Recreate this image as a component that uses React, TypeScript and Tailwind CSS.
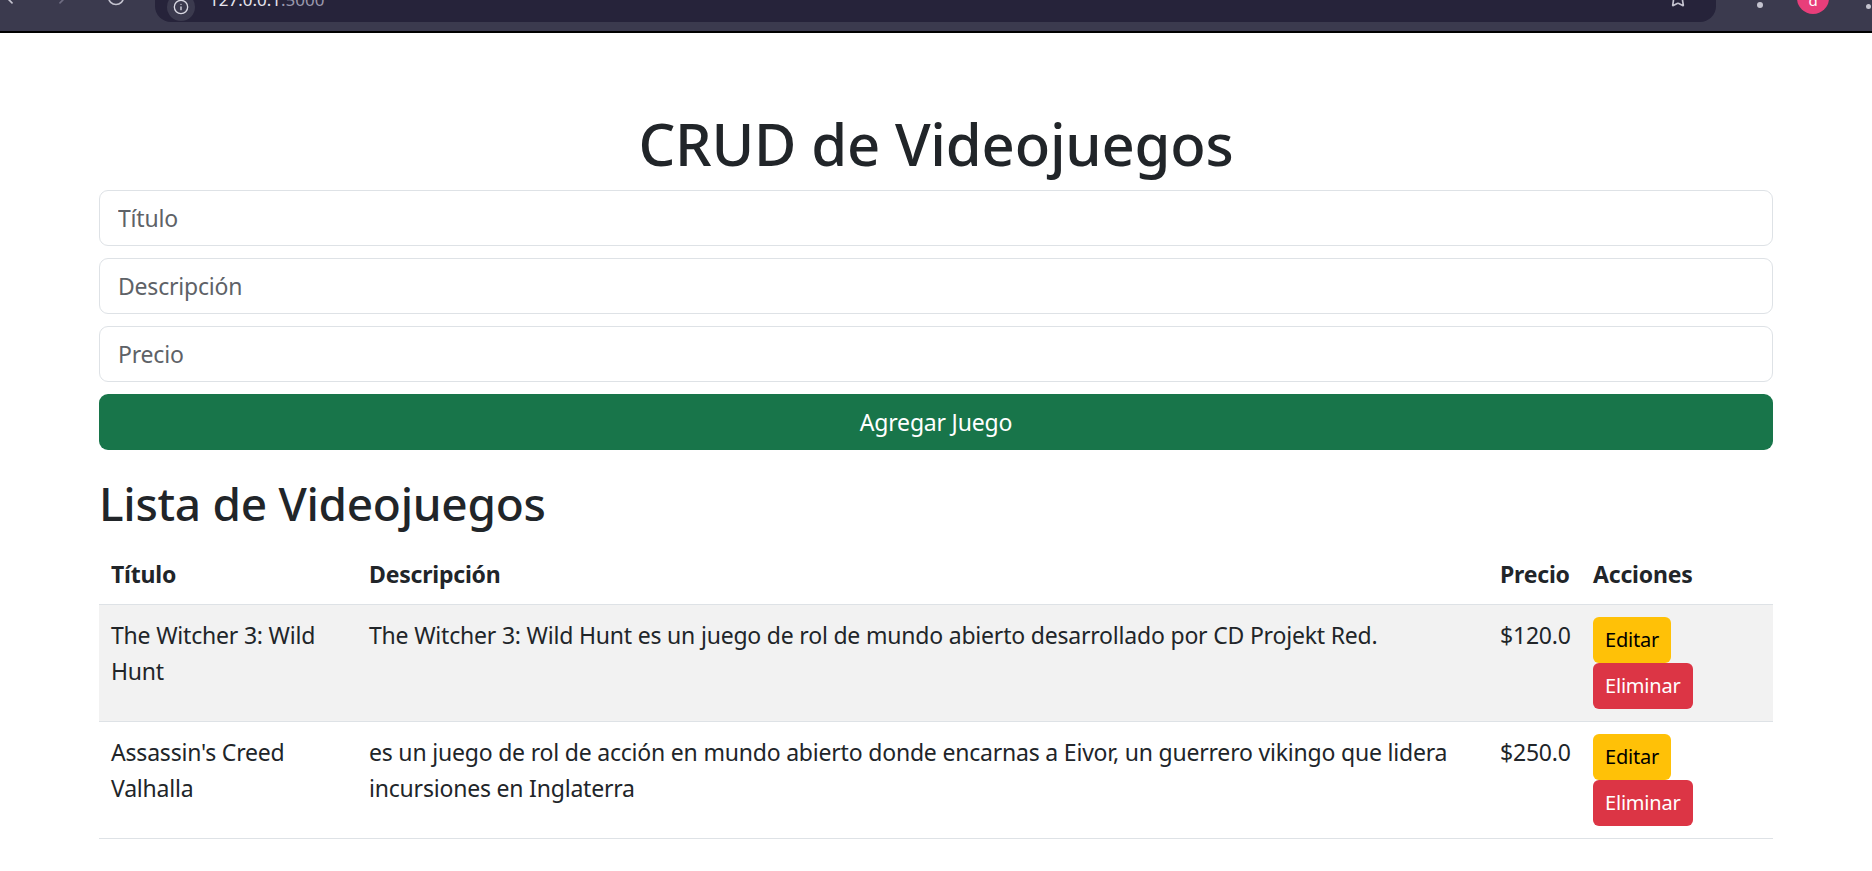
import { ArrowLeft, ArrowRight, RotateCw, Star, Info } from 'lucide-react';

const juegos = [
  {
    titulo: 'The Witcher 3: Wild Hunt',
    descripcion: 'The Witcher 3: Wild Hunt es un juego de rol de mundo abierto desarrollado por CD Projekt Red.',
    precio: '$120.0',
  },
  {
    titulo: "Assassin's Creed Valhalla",
    descripcion:
      'es un juego de rol de acción en mundo abierto donde encarnas a Eivor, un guerrero vikingo que lidera incursiones en Inglaterra',
    precio: '$250.0',
  },
];

const BrowserBar = () => (
  <div className="h-[33px] bg-[#3b3a4e] border-b-2 border-black overflow-hidden flex items-start">
    <ArrowLeft className="ml-[2px] -mt-[13px] w-[20px] h-[20px] text-[#c4c3cf]" />
    <ArrowRight className="ml-[28px] -mt-[13px] w-[20px] h-[20px] text-[#6f6d82]" />
    <RotateCw className="ml-[36px] -mt-[13px] w-[20px] h-[20px] text-[#c4c3cf]" />
    <div className="ml-[29px] w-[1561px] h-[22px] bg-[#26233a] rounded-b-[16px] flex items-start">
      <div className="ml-[12px] -mt-[7px] w-[28px] h-[28px] rounded-full bg-[#3b3a4e] flex items-center justify-center">
        <Info className="w-[16px] h-[16px] text-[#d9d8e2]" />
      </div>
      <span className="ml-[14px] -mt-[10px] text-[17px] leading-[20px] text-[#e6e5ee]">
        127.0.0.1<span className="text-[#9b99ad]">:5000</span>
      </span>
      <Star className="ml-auto mr-[28px] -mt-[12px] w-[20px] h-[20px] text-[#c4c3cf]" />
    </div>
    <div className="ml-[41px] mt-[2px] w-[6px] h-[6px] rounded-full bg-[#c4c3cf]" />
    <div className="ml-[34px] -mt-[18px] w-[32px] h-[32px] rounded-full bg-[#e83e7a] flex items-end justify-center text-white text-[15px] leading-[20px] pb-[4px]">
      d
    </div>
    <div className="ml-[37px] mt-[4px] w-[5px] h-[5px] rounded-full bg-[#c4c3cf]" />
  </div>
);

const inputClass =
  'block w-full h-[56px] mb-[12px] px-[18px] border border-[#dee2e6] rounded-[9px] text-[23px] tracking-[-0.2px] placeholder:text-[#5e6267] outline-none';

export default function App() {
  return (
    <div className="min-h-screen bg-white text-[#212529] font-['Noto_Sans','Liberation_Sans',sans-serif]">
      <BrowserBar />
      <div className="mx-auto w-[1710px] px-[18px] mt-[73px]">
        <h1 className="text-center text-[58px] leading-[72px] pt-[2px] font-medium tracking-[-0.2px] mb-[10px]">
          CRUD de Videojuegos
        </h1>
        <form onSubmit={(e) => e.preventDefault()}>
          <input placeholder="Título" className={inputClass} />
          <input placeholder="Descripción" className={inputClass} />
          <input placeholder="Precio" className={inputClass} />
          <button
            type="submit"
            className="block w-full h-[56px] bg-[#18754a] text-white text-[23px] tracking-[-0.2px] rounded-[9px]"
          >
            Agregar Juego
          </button>
        </form>

        <h2 className="mt-[24px] mb-[12px] text-[46px] leading-[58px] font-medium tracking-[-0.3px]">
          Lista de Videojuegos
        </h2>
        <table className="w-full table-fixed text-[23px] leading-[36px] tracking-[-0.2px]">
          <colgroup>
            <col className="w-[258px]" />
            <col />
            <col className="w-[93px]" />
            <col className="w-[192px]" />
          </colgroup>
          <thead>
            <tr className="border-b border-[#dee2e6]">
              <th className="p-[12px] text-left font-bold">Título</th>
              <th className="p-[12px] text-left font-bold">Descripción</th>
              <th className="p-[12px] text-left font-bold">Precio</th>
              <th className="p-[12px] text-left font-bold">Acciones</th>
            </tr>
          </thead>
          <tbody>
            {juegos.map((j, i) => (
              <tr
                key={j.titulo}
                className={`border-b border-[#dee2e6] ${i % 2 === 0 ? 'bg-[#f2f2f2]' : 'bg-white'}`}
              >
                <td className="p-[12px] align-top">{j.titulo}</td>
                <td className="p-[12px] align-top">{j.descripcion}</td>
                <td className="p-[12px] align-top">{j.precio}</td>
                <td className="p-[12px] align-top">
                  <div className="flex flex-col items-start">
                    <button className="h-[46px] px-[12px] bg-[#ffc107] text-black text-[20px] rounded-[6px]">
                      Editar
                    </button>
                    <button className="h-[46px] px-[12px] bg-[#dc3545] text-white text-[20px] rounded-[6px]">
                      Eliminar
                    </button>
                  </div>
                </td>
              </tr>
            ))}
          </tbody>
        </table>
      </div>
    </div>
  );
}
